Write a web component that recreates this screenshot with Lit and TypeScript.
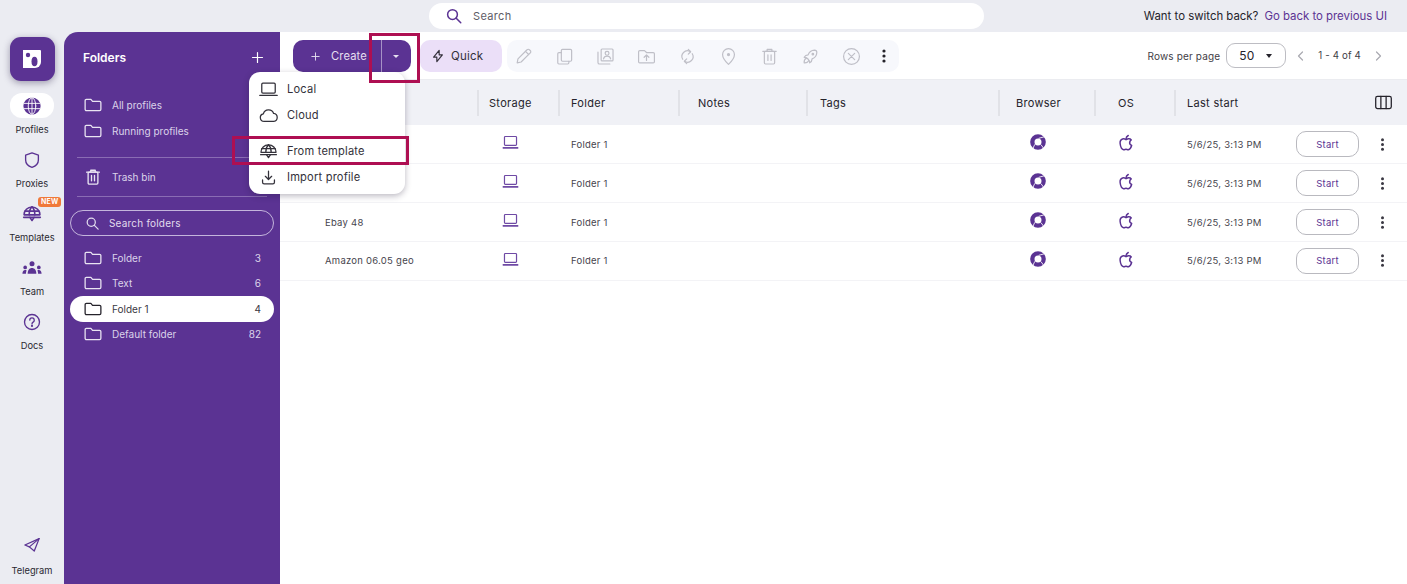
import { LitElement, html, css, svg } from "lit";
import { customElement } from "lit/decorators.js";

const ic = (size: number, body: unknown, sw = 1.5, cls = "") => html`<svg class=${cls} width=${size} height=${size} viewBox="0 0 24 24" fill="none" stroke="currentColor" stroke-width=${sw} stroke-linecap="round" stroke-linejoin="round">${body}</svg>`;

const folder = svg`<path d="M1.500 6.200A1.700 1.700 0 0 1 3.200 4.500h6l2.200 2.600h9.400a1.700 1.700 0 0 1 1.700 1.700v9a1.700 1.700 0 0 1-1.700 1.700H3.200a1.700 1.700 0 0 1-1.700-1.700z"/>`;
const laptop = svg`<rect x="3.500" y="4" width="17" height="12.500" rx="1.400"/><path d="M1 19.500h22"/>`;
const rowLaptop = svg`<rect x="3.500" y="3.500" width="17" height="12.500" rx="1.200"/><rect x="1" y="18.300" width="22" height="2.600" rx=".6" fill="currentColor" stroke="none"/>`;
const cloud = svg`<path d="M6.500 19.500a4.800 4.800 0 0 1-1-9.500 6.800 6.800 0 0 1 13-.6 5.100 5.100 0 0 1 .2 10.100z"/>`;
const dome = svg`<path d="M2.500 13a9.500 9.500 0 0 1 19 0z"/><path d="M12 3.500c-2.400 2.200-3.400 5.500-3.400 9.500M12 3.500c2.400 2.200 3.400 5.500 3.400 9.500M3.500 8.500h17"/><path d="M2 16h20"/><path d="M9.500 16l2.500 3.800 2.500-3.800"/>`;
const download = svg`<path d="M12 4v10.500M8 10.500l4 4 4-4"/><path d="M4.500 15v3a2 2 0 0 0 2 2h11a2 2 0 0 0 2-2v-3"/>`;
const search = svg`<circle cx="10" cy="10" r="6.500"/><path d="M15 15l6 6"/>`;
const plus = svg`<path d="M12 4v16M4 12h16"/>`;
const trash = svg`<path d="M3.500 5.500h17M9 5.500V3h6v2.500"/><rect x="5.500" y="5.500" width="13" height="16" rx="1.500"/><path d="M10 10v7M14 10v7"/>`;
const pencil = svg`<path d="M4 20l1-5L16.500 3.500a2 2 0 0 1 3 0l1 1a2 2 0 0 1 0 3L9 19z"/><path d="M14.500 5.500l4 4"/>`;
const copy = svg`<rect x="8" y="3" width="13" height="15" rx="1.500"/><path d="M8 7H5a1.500 1.500 0 0 0-1.500 1.500V20A1.500 1.500 0 0 0 5 21.500h11a1.500 1.500 0 0 0 1.500-1.500v-2"/>`;
const portrait = svg`<rect x="6.500" y="2.500" width="15" height="15" rx="1.200"/><circle cx="14" cy="8" r="2.400"/><path d="M9.500 15c.6-2.500 2.300-3.500 4.500-3.500s3.900 1 4.500 3.500"/><path d="M2.500 6.500v13a2 2 0 0 0 2 2h13"/>`;
const folderUp = svg`<path d="M2 6a1.500 1.500 0 0 1 1.500-1.500h6L12 7h8.500A1.500 1.500 0 0 1 22 8.500v10a1.500 1.500 0 0 1-1.500 1.500h-17A1.500 1.500 0 0 1 2 18.500z"/><path d="M12 17v-6.500M9 13l3-3 3 3"/>`;
const sync = svg`<path d="M6 15.500A7 7 0 0 1 15.500 5.800M18 8.500a7 7 0 0 1-9.500 9.700"/><path d="M13 3l3 3-3 3M11 15l-3 3 3 3"/>`;
const pin = svg`<path d="M12 22s-7.500-7-7.500-12.500a7.500 7.500 0 0 1 15 0C19.500 15 12 22 12 22z"/><circle cx="12" cy="9.500" r="1.300" fill="currentColor"/>`;
const rocket = svg`<path d="M4 13a8 8 0 0 1 7 7 6 6 0 0 0 3-5 9 9 0 0 0 6-8 3 3 0 0 0-3-3 9 9 0 0 0-8 6 6 6 0 0 0-5 3"/><path d="M7 14a6 6 0 0 0-3 6 6 6 0 0 0 6-3"/><circle cx="15" cy="9" r="1"/>`;
const xcircle = svg`<circle cx="12" cy="12" r="10"/><path d="M8 8l8 8M16 8l-8 8"/>`;
const bolt = svg`<path d="M14 2.500v7.500h5.500L10 21.500V14H4.500z"/>`;
const shield = svg`<path d="M12 2.500l8.500 3v6.500c0 4.800-3.500 8.200-8.500 9.800-5-1.600-8.500-5-8.500-9.800V5.500z"/>`;
const plane = svg`<path d="M21.500 3.500L2.500 12l6 2.500 6.500 5.500z"/><path d="M21.500 3.500L8.500 14.500"/>`;
const help = svg`<circle cx="12" cy="12" r="10"/><path d="M9 9.500a3 3 0 1 1 4.500 2.600c-1 .6-1.500 1.200-1.500 2.400"/><circle cx="12" cy="17.300" r=".6" fill="currentColor"/>`;
const apple = svg`<path d="M12 7.500c-1.500-1-3-1.400-4.500-.9C5 7.400 3.800 10 4.200 13c.4 3.300 2.200 7.500 4.600 8 1.300.2 2-.6 3.200-.6s1.900.8 3.200.6c2-.4 3.600-3.300 4.300-5.700-2.200-1-3-3.100-2.400-5 .3-1 1-1.800 1.900-2.400-1-1.300-2.500-1.800-4-1.500-.9.2-1.700.6-3 1.100z"/><path d="M12 7c0-2.200 1-4 3-5"/>`;
const chrome = svg`<circle cx="12" cy="12" r="8.500" stroke-width="6.500"/><path d="M13 6.500L22 4M7.200 15.500L4 22.500M16.500 16L20.500 21.500" stroke="#fff" stroke-width="1.300" stroke-linecap="butt"/>`;
const globe = svg`<circle cx="12" cy="12" r="11.500" fill="currentColor" stroke="none"/><g stroke="#fff" stroke-width="1.200" fill="none"><ellipse cx="12" cy="12" rx="5" ry="11"/><path d="M12 1v22M1.500 8.500h21M1.500 15.500h21"/></g>`;
const team = svg`<g fill="currentColor" stroke="none"><circle cx="12" cy="7" r="3"/><path d="M6.800 19c0-4.500 2.200-7 5.200-7s5.200 2.500 5.200 7z"/><circle cx="3.800" cy="11.300" r="2.200"/><path d="M.5 19c0-2.800 1.300-4.600 3.300-4.600.8 0 1.300.2 1.700.5-.5 1.100-.8 2.500-.8 4.100z"/><circle cx="20.200" cy="11.300" r="2.200"/><path d="M23.500 19c0-2.800-1.300-4.600-3.300-4.600-.8 0-1.300.2-1.700.5.500 1.100.8 2.500.8 4.100z"/></g>`;
const tableCols = svg`<rect x="1" y="3.500" width="22" height="17" rx="2.500"/><path d="M8.300 3.500v17M15.700 3.500v17"/>`;

const rail = [
  { label: "Profiles", icon: globe, active: true, sw: 1.5, size: 18 },
  { label: "Proxies", icon: shield, sw: 1.8, size: 18 },
  { label: "Templates", icon: dome, badge: true, sw: 1.9, size: 20 },
  { label: "Team", icon: team, sw: 1.5, size: 20 },
  { label: "Docs", icon: help, sw: 1.8, size: 18 },
];
const folders = [
  { n: "Folder", c: 3 },
  { n: "Text", c: 6 },
  { n: "Folder 1", c: 4, sel: true },
  { n: "Default folder", c: 82 },
];
const actions = [pencil, copy, portrait, folderUp, sync, pin, trash, rocket, xcircle];
const cols = [["", ""], ["Storage", "store"], ["Folder", ""], ["Notes", "notes"], ["Tags", "tags"], ["Browser", "br"], ["OS", "os"], ["Last start", ""]];
const rows = ["", "", "Ebay 48", "Amazon 06.05 geo"];
const menu = [
  { t: "Local", i: laptop }, { t: "Cloud", i: cloud }, { t: "From template", i: dome, gap: true }, { t: "Import profile", i: download },
];

@customElement("app-root")
export class AppRoot extends LitElement {
  static styles = css`
    :host { display: block; height: 584px; position: relative; overflow: hidden; background: #ebecf2; font-family: Inter, "Liberation Sans", sans-serif; color: #25232b; --p: #5b3393; }
    * { box-sizing: border-box; }
    svg { display: block; flex: none; }
    .top { height: 32px; display: flex; align-items: center; padding-left: 429px; }
    .search { width: 555px; height: 26px; background: #fff; border-radius: 13px; display: flex; align-items: center; padding-left: 16px; gap: 10px; color: var(--p); }
    .search span { font-size: 11px; letter-spacing: .35px; color: #5e5c66; }
    .switch { margin-left: auto; margin-right: 20px; font-size: 11.4px; display: flex; gap: 6px; }
    .switch b { font-weight: 400; color: var(--p); }
    .body { display: flex; height: 552px; }
    .rail { width: 64px; display: flex; flex-direction: column; align-items: center; padding-top: 5px; }
    .logo { width: 45px; height: 44px; border-radius: 11px; background: var(--p); box-shadow: 0 2px 7px rgba(40,30,70,.4); display: flex; align-items: center; justify-content: center; margin-bottom: 12px; }
    .nav { width: 44px; height: 54px; display: flex; flex-direction: column; align-items: center; color: var(--p); position: relative; }
    .nav .ico { width: 44px; height: 25px; border-radius: 12px; display: flex; align-items: center; justify-content: center; }
    .nav.active .ico { background: #fff; }
    .nav span { font-size: 9.300px; color: #2a2830; margin-top: 5px; line-height: 14px; white-space: nowrap; }
    .badge { position: absolute; left: 28px; top: -4px; background: #f0793a; color: #fff; font-size: 7px; font-weight: 700; line-height: 10px; border-radius: 3px; padding: 0 3px; letter-spacing: .2px; font-style: normal; }
    .spacer { flex: 1; }
    .nav.tg { height: 46px; margin-bottom: 6px; }
    .nav.tg span { margin-top: 7px; }
    .panel { width: 216px; background: var(--p); border-radius: 14px 0 0 0; color: #dcd4ea; position: relative; padding: 0 6px; }
    .ph { display: flex; align-items: center; justify-content: space-between; height: 50px; padding: 0 9px 0 13px; color: #fff; font-size: 12px; font-weight: 600; }
    .f { height: 25.500px; display: flex; align-items: center; padding: 0 13px 0 14px; gap: 10px; font-size: 10px; border-radius: 13px; }
    .f svg { color: #e9e4f2; }
    .f em { font-style: normal; margin-left: auto; }
    .f.sel { background: #fff; color: #3a3842; }
    .f.sel svg { color: #25232b; }
    .first { margin-top: 10.500px; }
    .hr { height: 1px; background: #8a6cb4; margin: 0 7px; }
    .hr.a { margin-top: 13px; margin-bottom: 7px; }
    .hr.b { margin-top: 6px; margin-bottom: 13px; }
    .fs { height: 26px; border: 1px solid #c4b5dc; border-radius: 13px; display: flex; align-items: center; padding-left: 14px; gap: 9px; font-size: 10px; letter-spacing: .2px; margin-bottom: 9px; color: #e2dcee; }
    .main { flex: 1; min-width: 0; background: #fff; display: flex; flex-direction: column; }
    .bar { height: 48px; border-bottom: 1px solid #ebecf0; display: flex; align-items: flex-start; padding: 8px 0 0 13px; }
    .create { width: 118px; height: 32px; background: var(--p); border-radius: 10px; display: flex; align-items: center; color: #e6dff0; font-size: 11.200px; letter-spacing: .1px; }
    .create .l { width: 88.500px; display: flex; align-items: center; gap: 10px; padding-left: 17px; border-right: 1px solid #a692c6; height: 32px; }
    .create .r { flex: 1; display: flex; justify-content: center; }
    .caret { width: 0; height: 0; border: 3.500px solid transparent; border-top: 4px solid currentColor; border-bottom: 0; }
    .create .caret { border-width: 3px 3px 0; }
    .quick { width: 82px; height: 32px; margin-left: 9px; background: #ebdff8; border-radius: 10px; display: flex; align-items: center; padding-left: 11px; gap: 6px; font-size: 11.500px; letter-spacing: .2px; color: #33303a; }
    .acts { width: 392px; height: 32px; margin-left: 5px; background: #f7f8fc; border-radius: 10px; display: flex; align-items: center; gap: 9px; color: #bfbfc7; }
    .acts .a { width: 32px; display: flex; justify-content: center; }
    .acts .more { color: #25232b; }
    .pg { margin-left: auto; margin-top: 3px; display: flex; align-items: center; height: 25px; font-size: 10px; letter-spacing: .15px; color: #3f3d46; padding-right: 23px; }
    .sel50 { width: 60px; height: 25px; border: 1px solid #bdbdc3; border-radius: 9px; margin-left: 6px; display: flex; align-items: center; justify-content: space-between; padding: 0 13px 0 12px; font-size: 12px; color: #25232b; }
    .chev { color: #a9a9b0; }
    .prev { margin-left: 9px; }
    .pn { margin: 0 11px; white-space: nowrap; font-size: 9.700px; }
    .grid { display: grid; grid-template-columns: 197px 81px 120px 128px 192px 96px 80px 1fr; align-items: center; }
    .head { height: 45px; background: #f0f1f6; font-size: 11px; letter-spacing: .3px; position: relative; }
    .th { height: 26px; display: flex; align-items: center; padding-left: 11px; border-left: 2px solid #e1e2e7; }
    .th:first-child { border-left: 0; }
    .th.store { padding-left: 10px; }
    .th.notes { padding-left: 18px; }
    .th.tags { padding-left: 12px; }
    .th.br { padding-left: 16px; }
    .th.os { padding-left: 22px; }
    .colsbtn { position: absolute; right: 15px; top: 14px; color: #25232b; }
    .row { height: 38.900px; padding-top: .6px; border-bottom: 1px solid #f3f3f6; font-size: 9.500px; letter-spacing: .25px; color: #46444d; }
    .td { padding-left: 13px; display: flex; align-items: center; }
    .td.name { padding-left: 45px; }
    .td.store { color: #6f4aa5; padding-left: 25px; margin-top: -3px; }
    .td.br { color: var(--p); padding-left: 32px; margin-top: -4px; }
    .td.os { color: var(--p); padding-left: 23px; margin-top: -2px; }
    .td.last { padding-right: 17px; }
    .start { margin-left: auto; width: 63px; height: 26px; border: 1px solid #b9b9bf; border-radius: 10px; display: flex; align-items: center; justify-content: center; color: var(--p); }
    .kebab { margin-left: 16px; color: #3a3842; }
    .menu { position: absolute; left: 249px; top: 72px; width: 156px; height: 122px; background: #fff; border-radius: 11px; box-shadow: 0 2px 6px rgba(30,20,50,.3); padding-top: 4.200px; font-size: 11.100px; letter-spacing: .2px; color: #33313a; }
    .mi { height: 26px; display: flex; align-items: center; gap: 9px; padding-left: 10px; }
    .mi.gap { margin-top: 10px; }
    .mark { position: absolute; border: 3px solid #ae0f52; pointer-events: none; }
    .m1 { left: 369px; top: 33px; width: 51px; height: 50px; }
    .m2 { left: 232px; top: 136px; width: 177px; height: 29px; }
  `;

  private dots(size: number) {
    return html`<svg width=${size} height=${size} viewBox="0 0 24 24" fill="currentColor"><circle cx="12" cy="4.500" r="2.400"/><circle cx="12" cy="12" r="2.400"/><circle cx="12" cy="19.500" r="2.400"/></svg>`;
  }

  render() {
    return html`
      <div class="top">
        <div class="search">${ic(18, search, 2)}<span>Search</span></div>
        <div class="switch">Want to switch back? <b>Go back to previous UI</b></div>
      </div>
      <div class="body">
        <aside class="rail">
          <div class="logo"><svg width="20" height="20" viewBox="0 0 20 20"><path d="M1 1h17a1 1 0 0 1 1 1v11a6 6 0 0 1-6 6H1z" fill="#fff"/><circle cx="6" cy="6" r="2.200" fill="#5b3393"/><ellipse cx="12.500" cy="12.500" rx="3" ry="4.800" fill="#5b3393"/></svg></div>
          ${rail.map((r) => html`<div class="nav ${r.active ? "active" : ""}"><div class="ico">${ic(r.size, r.icon, r.sw)}</div><span>${r.label}</span>${r.badge ? html`<i class="badge">NEW</i>` : ""}</div>`)}
          <div class="spacer"></div>
          <div class="nav tg"><div class="ico">${ic(18, plane, 1.7)}</div><span>Telegram</span></div>
        </aside>
        <section class="panel">
          <div class="ph"><span>Folders</span>${ic(15, plus, 1.9)}</div>
          <div class="f first">${ic(18, folder, 1.7)}All profiles</div>
          <div class="f">${ic(18, folder, 1.7)}Running profiles</div>
          <div class="hr a"></div>
          <div class="f">${ic(18, trash, 1.8)}Trash bin</div>
          <div class="hr b"></div>
          <div class="fs">${ic(15, search, 2)}Search folders</div>
          ${folders.map((f) => html`<div class="f ${f.sel ? "sel" : ""}">${ic(18, folder, 1.7)}${f.n}<em>${f.c}</em></div>`)}
        </section>
        <main class="main">
          <div class="bar">
            <div class="create"><div class="l">${ic(11, plus, 2)}Create</div><div class="r"><div class="caret"></div></div></div>
            <div class="quick">${ic(14, bolt, 2)}Quick</div>
            <div class="acts">${actions.map((a) => html`<div class="a">${ic(19, a, 1.5)}</div>`)}<div class="more">${this.dots(16)}</div></div>
            <div class="pg">Rows per page<div class="sel50">50<div class="caret"></div></div>
              <span class="chev prev">${ic(12, svg`<path d="M15 4l-8 8 8 8"/>`, 2.4)}</span>
              <span class="pn">1 - 4 of 4</span>
              <span class="chev">${ic(12, svg`<path d="M9 4l8 8-8 8"/>`, 2.4)}</span>
            </div>
          </div>
          <div class="grid head">
            ${cols.map((c) => html`<div class="th ${c[1]}">${c[0]}</div>`)}
            <div class="colsbtn">${ic(17, tableCols, 1.8)}</div>
          </div>
          ${rows.map((n) => html`
            <div class="grid row">
              <div class="td name">${n}</div>
              <div class="td store">${ic(17, rowLaptop, 1.7)}</div>
              <div class="td">Folder 1</div>
              <div class="td"></div>
              <div class="td"></div>
              <div class="td br">${ic(16, chrome)}</div>
              <div class="td os">${ic(18, apple, 2)}</div>
              <div class="td last">5/6/25, 3:13 PM<div class="start">Start</div><div class="kebab">${this.dots(15)}</div></div>
            </div>`)}
        </main>
      </div>
      <div class="menu">
        ${menu.map((m) => html`<div class="mi ${m.gap ? "gap" : ""}">${ic(19, m.i, 1.6)}${m.t}</div>`)}
      </div>
      <div class="mark m1"></div>
      <div class="mark m2"></div>
    `;
  }
}
